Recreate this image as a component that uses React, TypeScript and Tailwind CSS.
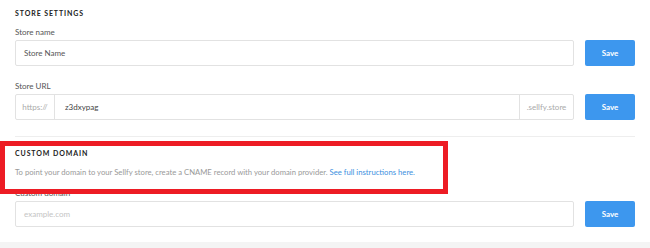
import React from "react";

function SaveButton() {
  return (
    <button className="w-[50px] h-[26px] shrink-0 rounded-[2px] bg-[#3d97ee] text-white text-[8px] font-bold">
      Save
    </button>
  );
}

export default function App() {
  return (
    <div className="relative w-[650px] h-[248px] overflow-hidden bg-white font-['Lato',sans-serif]">
      <div className="px-[15px]">
        <h2 className="pt-[9px] text-[7px] leading-[8px] font-bold tracking-[0.9px] text-[#222]">
          STORE SETTINGS
        </h2>

        <div className="mt-[10px] text-[8px] leading-[10px] text-[#555]">Store name</div>
        <div className="mt-[3px] flex gap-[11px]">
          <div className="flex-1 h-[26px] border border-[#e2e2e2] rounded-[2px] flex items-center px-[8px] text-[8px] text-[#555]">
            Store Name
          </div>
          <SaveButton />
        </div>

        <div className="mt-[15px] text-[8px] leading-[10px] text-[#555]">Store URL</div>
        <div className="mt-[3px] flex gap-[11px]">
          <div className="flex-1 h-[26px] border border-[#e2e2e2] rounded-[2px] flex text-[8px]">
            <div className="w-[39px] flex items-center justify-center border-r border-[#e2e2e2] text-[#aaa]">
              https://
            </div>
            <div className="flex-1 flex items-center px-[10px] text-[#444]">z3dxypag</div>
            <div className="w-[54px] flex items-center justify-center border-l border-[#e2e2e2] text-[#aaa]">
              .sellfy.store
            </div>
          </div>
          <SaveButton />
        </div>

        <div className="mt-[16px] h-px bg-[#eeeeee]" />

        <h2 className="mt-[12px] text-[7px] leading-[8px] font-bold tracking-[0.9px] text-[#222]">
          CUSTOM DOMAIN
        </h2>
        <p className="mt-[10px] text-[7.7px] leading-[10px] text-[#999]">
          To point your domain to your Sellfy store, create a CNAME record with your domain provider.{" "}
          <span className="text-[#3d8fe0]">See full instructions here.</span>
        </p>

        <div className="mt-[11px] text-[8px] leading-[10px] text-[#555]">Custom domain</div>
        <div className="mt-[3px] flex gap-[11px]">
          <div className="flex-1 h-[26px] border border-[#e2e2e2] rounded-[2px] flex items-center px-[8px] text-[8px] text-[#c4c4c4]">
            example.com
          </div>
          <SaveButton />
        </div>
      </div>

      <div className="mt-[15px] h-[6px] bg-[#f4f4f4]" />

      <div className="absolute left-0 top-[141px] w-[448px] h-[53px] border-[5px] border-[#ed1c24]" />
    </div>
  );
}
